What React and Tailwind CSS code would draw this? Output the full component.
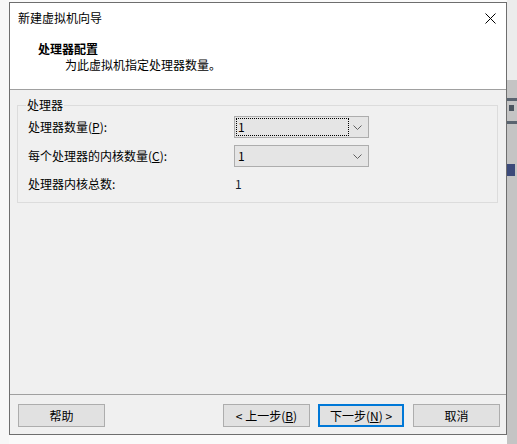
import React from "react";

const font = { fontFamily: '"Noto Sans CJK SC", "Microsoft YaHei", sans-serif' };

const Combo = ({ value, focused }) => (
  <div className="relative flex h-[22px] w-[135px] items-center border border-[#adadad] bg-[#e5e5e5] pl-[3px]">
    {focused && (
      <div className="absolute left-[1px] top-[1px] h-[18px] w-[113px] border border-dotted border-black" />
    )}
    <span className="flex-1 leading-[16px]">{value}</span>
    <svg width="9" height="5" viewBox="0 0 9 5" className="mr-[6px]">
      <path d="M0.5 0.5 L4.5 4.5 L8.5 0.5" fill="none" stroke="#606060" strokeWidth="1" />
    </svg>
  </div>
);

const Btn = ({ children, primary }) => (
  <button
    className={
      primary
        ? "flex h-[23px] w-[86px] items-center justify-center border-2 border-[#0078d7] bg-[#e1e1e1] leading-[16px]"
        : "flex h-[23px] w-[87px] items-center justify-center border border-[#adadad] bg-[#e1e1e1] leading-[16px]"
    }
  >
    {children}
  </button>
);

export default function App() {
  return (
    <div className="flex h-[444px] w-[517px] bg-[#fafafa] text-[12px] text-black" style={font}>
      <div className="w-[9px] bg-[#f7f7f7]" />
      <div className="mt-[2px] flex h-[433px] w-[498px] flex-col border border-[#6e6e6e] bg-white">
        {/* title bar */}
        <div className="flex h-[30px] items-center justify-between pl-[8px] pr-[10px]">
          <span className="leading-[16px]">新建虚拟机向导</span>
          <svg width="11" height="11" viewBox="0 0 11 11">
            <path d="M0.5 0.5 L10.5 10.5 M10.5 0.5 L0.5 10.5" stroke="#000" strokeWidth="1" />
          </svg>
        </div>

        {/* header */}
        <div className="flex flex-col border-b border-[#a0a0a0] pb-[16px] pt-[8px]">
          <span className="pl-[28px] font-bold leading-[16px]">处理器配置</span>
          <span className="pl-[55px] leading-[16px]">为此虚拟机指定处理器数量。</span>
        </div>

        {/* body */}
        <div className="flex flex-1 flex-col bg-[#f0f0f0] pl-[7px] pr-[8px] pt-[15px]">
          <div className="relative flex flex-col gap-[7px] border border-[#dcdcdc] pb-[8px] pl-[10px] pt-[10px]">
            <span className="absolute left-[8px] top-[-9px] bg-[#f0f0f0] px-[1px] leading-[16px]">处理器</span>
            <div className="flex h-[22px] items-center">
              <span className="w-[206px] leading-[16px]">
                处理器数量(<span className="underline">P</span>):
              </span>
              <Combo value="1" focused />
            </div>
            <div className="flex h-[22px] items-center">
              <span className="w-[206px] leading-[16px]">
                每个处理器的内核数量(<span className="underline">C</span>):
              </span>
              <Combo value="1" />
            </div>
            <div className="flex h-[20px] items-center">
              <span className="w-[207px] leading-[16px]">处理器内核总数:</span>
              <span className="leading-[16px] text-[#102030]">1</span>
            </div>
          </div>
        </div>

        {/* footer */}
        <div className="flex h-[40px] items-start border-t border-[#a0a0a0] bg-[#f0f0f0] pl-[8px] pt-[9px]">
          <Btn>帮助</Btn>
          <div className="ml-[118px] flex gap-[8px]">
            <Btn>
              &lt; 上一步(<span className="underline">B</span>)
            </Btn>
            <Btn primary>
              下一步(<span className="underline">N</span>) &gt;
            </Btn>
          </div>
          <div className="ml-[9px]">
            <Btn>取消</Btn>
          </div>
        </div>
      </div>

      {/* background app peeking on the right */}
      <div className="flex w-[10px] flex-col">
        <div className="h-[80px] bg-[#ececec]" />
        <div className="flex flex-1 flex-col bg-[#c4c4c4]">
          <div className="mt-[18px] h-[3px] bg-[#5a6470]" />
          <div className="mt-[4px] ml-[2px] h-[6px] w-[5px] bg-[#4b5560]" />
          <div className="mt-[10px] h-[3px] bg-[#5a6470]" />
          <div className="mt-[40px] h-[12px] w-[8px] bg-[#3c4a7a]" />
          <div className="flex-1" />
        </div>
      </div>
    </div>
  );
}
